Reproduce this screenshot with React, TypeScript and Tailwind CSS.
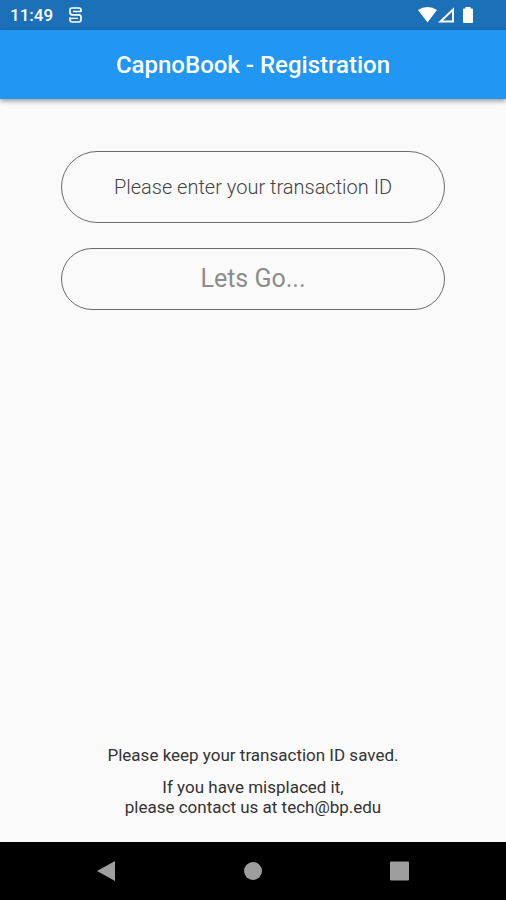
import { useState } from "react";
import type { FormEvent } from "react";

function StatusBar() {
  return (
    <div className="flex h-[30px] items-center justify-between bg-[#1b70b7] pl-[10px] pr-8 text-white">
      <div className="flex items-center gap-4">
        <span className="text-[17px] font-medium leading-5">11:49</span>
        <svg className="h-4 w-[13px]" viewBox="0 0 13 16" fill="none" stroke="currentColor" strokeWidth="1.7">
          <path d="M12 5V3Q12 1 10 1H3Q1 1 1 3V5.500Q1 7.800 3.300 7.800H9.700Q12 7.800 12 10V12.800Q12 15 9.800 15H3.200Q1 15 1 12.800V10.500" />
          <path d="M4 4.500H12M1 11.400H9" strokeWidth="1.3" />
        </svg>
      </div>
      <svg className="h-4 w-14" viewBox="0 0 56 16">
        <path d="M0 3Q4.300 0 9.500 0T19 3L9.500 15.500Z" fill="currentColor" />
        <path d="M35 2.500V14.500H22.500Z" fill="none" stroke="currentColor" strokeWidth="2" />
        <path d="M47.500 0H52.500V1.500H54Q55 1.500 55 2.500V15Q55 16 54 16H46Q45 16 45 15V2.500Q45 1.500 46 1.500H47.500Z" fill="currentColor" />
      </svg>
    </div>
  );
}

function RegistrationForm() {
  const [transactionId, setTransactionId] = useState("");

  const handleSubmit = (e: FormEvent) => {
    e.preventDefault();
  };

  return (
    <form onSubmit={handleSubmit} className="flex flex-col gap-[25px]">
      <input
        type="text"
        aria-label="Transaction ID"
        placeholder="Please enter your transaction ID"
        value={transactionId}
        onChange={(e) => setTransactionId(e.target.value)}
        className="
          h-[72px] w-full rounded-full border border-[#6c6c6c] px-6 text-center
          text-xl font-light text-[#333] outline-none placeholder:text-[#444]
        "
      />
      <button
        type="submit"
        className="h-[62px] w-full rounded-full border border-[#6c6c6c] text-[25px] text-[#8c8c8c]"
      >
        Lets Go...
      </button>
    </form>
  );
}

function NavigationBar() {
  return (
    <nav className="grid h-[58px] grid-cols-3 place-items-center bg-black px-8 text-[#9e9e9e]">
      <button type="button" aria-label="Back">
        <svg className="h-5 w-5" viewBox="0 0 20 20" fill="currentColor">
          <path d="M1 10L19 0V20Z" />
        </svg>
      </button>
      <button type="button" aria-label="Home">
        <svg className="h-5 w-5" viewBox="0 0 20 20" fill="currentColor">
          <circle cx="10" cy="10" r="9" />
        </svg>
      </button>
      <button type="button" aria-label="Overview">
        <svg className="h-5 w-5" viewBox="0 0 20 20" fill="currentColor">
          <rect x="0" y="0.500" width="19" height="19" rx="1" />
        </svg>
      </button>
    </nav>
  );
}

export default function App() {
  return (
    <div className="flex min-h-screen flex-col bg-[#fafafa] font-[Roboto,sans-serif]">
      <StatusBar />
      <header className="z-10 flex h-[69px] items-center justify-center bg-[#2196f3] shadow-[0_2px_5px_rgba(0,0,0,0.4)]">
        <h1 className="text-2xl font-medium text-white">CapnoBook - Registration</h1>
      </header>
      <main className="flex flex-1 flex-col justify-between px-[61px] pt-[52px] pb-[25px]">
        <RegistrationForm />
        <div className="flex flex-col gap-3 text-center text-[17px] leading-5 text-[#333]">
          <p>Please keep your transaction ID saved.</p>
          <p>
            If you have misplaced it,
            <br />
            please contact us at tech@bp.edu
          </p>
        </div>
      </main>
      <NavigationBar />
    </div>
  );
}
